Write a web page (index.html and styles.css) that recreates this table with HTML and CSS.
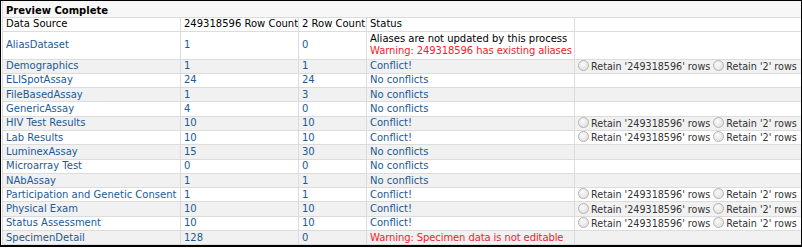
FILE: index.html
```html
<!DOCTYPE html>
<html lang="en">
  <head>
    <meta charset="UTF-8" />
    <title>Preview Complete</title>
    <link rel="stylesheet" href="styles.css">
  </head>
  <body>
    <div class="frame">
      <table class="preview">
        <colgroup>
          <col class="c-source">
          <col class="c-count1">
          <col class="c-count2">
          <col class="c-status">
          <col class="c-action">
        </colgroup>
        <tr class="title-row">
          <th colspan="5">Preview Complete</th>
        </tr>
        <tr class="head-row">
          <td>Data Source</td>
          <td>249318596 Row Count</td>
          <td>2 Row Count</td>
          <td>Status</td>
          <td></td>
        </tr>
        <tr class="tall">
          <td><a href="#">AliasDataset</a></td>
          <td class="num">1</td>
          <td class="num">0</td>
          <td><span class="note">Aliases are not updated by this process</span><br><span class="warn">Warning: 249318596 has existing aliases</span></td>
          <td></td>
        </tr>
        <tr class="alt">
          <td><a href="#">Demographics</a></td>
          <td class="num">1</td>
          <td class="num">1</td>
          <td class="msg">Conflict!</td>
          <td class="retain"><span class="radio"></span>Retain '249318596' rows <span class="radio"></span>Retain '2' rows</td>
        </tr>
        <tr>
          <td><a href="#">ELISpotAssay</a></td>
          <td class="num">24</td>
          <td class="num">24</td>
          <td class="msg">No conflicts</td>
          <td></td>
        </tr>
        <tr class="alt">
          <td><a href="#">FileBasedAssay</a></td>
          <td class="num">1</td>
          <td class="num">3</td>
          <td class="msg">No conflicts</td>
          <td></td>
        </tr>
        <tr>
          <td><a href="#">GenericAssay</a></td>
          <td class="num">4</td>
          <td class="num">0</td>
          <td class="msg">No conflicts</td>
          <td></td>
        </tr>
        <tr class="alt">
          <td><a href="#">HIV Test Results</a></td>
          <td class="num">10</td>
          <td class="num">10</td>
          <td class="msg">Conflict!</td>
          <td class="retain"><span class="radio"></span>Retain '249318596' rows <span class="radio"></span>Retain '2' rows</td>
        </tr>
        <tr>
          <td><a href="#">Lab Results</a></td>
          <td class="num">10</td>
          <td class="num">10</td>
          <td class="msg">Conflict!</td>
          <td class="retain"><span class="radio"></span>Retain '249318596' rows <span class="radio"></span>Retain '2' rows</td>
        </tr>
        <tr class="alt">
          <td><a href="#">LuminexAssay</a></td>
          <td class="num">15</td>
          <td class="num">30</td>
          <td class="msg">No conflicts</td>
          <td></td>
        </tr>
        <tr>
          <td><a href="#">Microarray Test</a></td>
          <td class="num">0</td>
          <td class="num">0</td>
          <td class="msg">No conflicts</td>
          <td></td>
        </tr>
        <tr class="alt">
          <td><a href="#">NAbAssay</a></td>
          <td class="num">1</td>
          <td class="num">1</td>
          <td class="msg">No conflicts</td>
          <td></td>
        </tr>
        <tr>
          <td><a href="#">Participation and Genetic Consent</a></td>
          <td class="num">1</td>
          <td class="num">1</td>
          <td class="msg">Conflict!</td>
          <td class="retain"><span class="radio"></span>Retain '249318596' rows <span class="radio"></span>Retain '2' rows</td>
        </tr>
        <tr class="alt">
          <td><a href="#">Physical Exam</a></td>
          <td class="num">10</td>
          <td class="num">10</td>
          <td class="msg">Conflict!</td>
          <td class="retain"><span class="radio"></span>Retain '249318596' rows <span class="radio"></span>Retain '2' rows</td>
        </tr>
        <tr>
          <td><a href="#">Status Assessment</a></td>
          <td class="num">10</td>
          <td class="num">10</td>
          <td class="msg">Conflict!</td>
          <td class="retain"><span class="radio"></span>Retain '249318596' rows <span class="radio"></span>Retain '2' rows</td>
        </tr>
        <tr class="alt">
          <td><a href="#">SpecimenDetail</a></td>
          <td class="num">128</td>
          <td class="num">0</td>
          <td><span class="warn">Warning: Specimen data is not editable</span></td>
          <td></td>
        </tr>
      </table>
    </div>
  </body>
</html>
```

FILE: styles.css
```css
body {
  margin: 0;
  padding: 0;
  background: #fff;
  font-family: 'DejaVu Sans', Verdana, sans-serif;
  font-size: 10px;
  color: #222;
}

.frame {
  width: 799px;
  height: 244px;
  border-top: 1px solid #000;
  border-left: 1px solid #000;
  border-right: 2px solid #000;
  border-bottom: 2px solid #000;
  padding-left: 1px;
  overflow: hidden;
}

.preview {
  border-collapse: collapse;
  table-layout: fixed;
  width: 800px;
  white-space: nowrap;
}

.c-source { width: 178px; }
.c-count1 { width: 118px; }
.c-count2 { width: 68px; }
.c-status { width: 208px; }
.c-action { width: 228px; }

.preview td,
.preview th {
  padding: 0 3px;
  height: 13.3px;
  line-height: 12px;
  border: 1px solid #dcdcdc;
  text-align: left;
  vertical-align: middle;
  overflow: hidden;
}

.title-row th {
  background: #f7f7f7;
  font-weight: bold;
  color: #000;
  height: 11px;
  border-top: none;
  padding-top: 4px;
}

.head-row td {
  color: #000;
  height: 12.5px;
}

.tall td {
  height: 27px;
}

.alt td {
  background: #f1f1f1;
}

.preview a {
  color: #1a5a96;
  text-decoration: none;
}

.num,
.msg {
  color: #1a5a96;
}

.note {
  color: #000;
}

.warn {
  color: #f0222e;
  letter-spacing: -0.1px;
}

.preview td.retain {
  color: #333;
  padding-left: 3px;
  font-size: 9.6px;
}

.radio {
  display: inline-block;
  width: 9px;
  height: 9px;
  margin-right: 2px;
  border: 1px solid #b4b4b4;
  border-radius: 50%;
  background: radial-gradient(circle at 40% 35%, #fbfbfb, #dadada);
  vertical-align: -1px;
}
```
